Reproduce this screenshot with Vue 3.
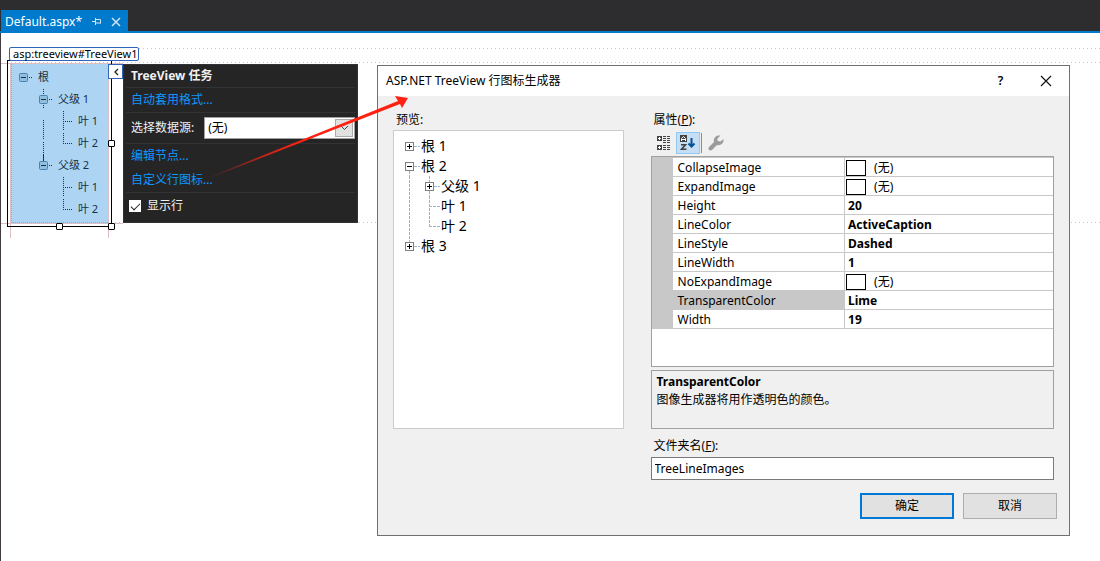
<script setup>
import { ref } from 'vue'

const dataSource = ref('none')
const showLines = ref(true)
const folder = ref('TreeLineImages')

const groups = [
  { label: '父级 1', kind: 'first', leaves: ['叶 1', '叶 2'] },
  { label: '父级 2', kind: 'last', leaves: ['叶 1', '叶 2'] },
]

const preview = [
  { cells: ['plus'], label: '根 1' },
  { cells: ['minus-down'], label: '根 2' },
  { cells: ['line', 'plus-mid'], label: '父级 1' },
  { cells: ['line', 'tee'], label: '叶 1' },
  { cells: ['line', 'elbow'], label: '叶 2' },
  { cells: ['plus-up'], label: '根 3' },
]

const properties = [
  { name: 'CollapseImage', image: true },
  { name: 'ExpandImage', image: true },
  { name: 'Height', value: '20' },
  { name: 'LineColor', value: 'ActiveCaption' },
  { name: 'LineStyle', value: 'Dashed' },
  { name: 'LineWidth', value: '1' },
  { name: 'NoExpandImage', image: true },
  { name: 'TransparentColor', value: 'Lime', selected: true },
  { name: 'Width', value: '19' },
]

const linePaths = {
  plus: 'M14 10.5H20',
  'minus-down': 'M14 10.5H20M9.5 15V20',
  line: 'M9.5 0V20',
  'plus-mid': 'M9.5 0V6M9.5 15V20M14 10.5H20',
  tee: 'M9.5 0V20M9 10.5H20',
  elbow: 'M9.5 0V11M9 10.5H20',
  'plus-up': 'M9.5 0V6M14 10.5H20',
}
</script>

<template>
  <div class="ide">
    <header class="tabs">
      <div class="tab">
        <span class="tab-name">Default.aspx*</span>
        <button class="tab-btn" type="button" aria-label="固定">
          <svg width="11" height="9" viewBox="0 0 11 9"><path d="M1 4.5H4M4.5 1V8M4.5 2.5H9.5V6.5M4.5 6H9.5" /></svg>
        </button>
        <button class="tab-btn close" type="button" aria-label="关闭">
          <svg width="10" height="10" viewBox="0 0 10 10"><path d="M1 1L9 9M9 1L1 9" /></svg>
        </button>
      </div>
    </header>

    <main class="surface">
      <i class="dots tag-line"></i>
      <i class="dots top-line"></i>
      <i class="dots bottom-line"></i>
      <i class="guide h top"></i>
      <i class="guide h bottom"></i>
      <i class="guide v left"></i>
      <i class="guide v right"></i>

      <section class="control">
        <div class="tag">asp:treeview#TreeView1</div>
        <div class="frame">
          <div class="tree">
            <div class="row">
              <svg class="cell" viewBox="0 0 20 22"><rect class="box" x="5.5" y="7.5" width="8" height="8" rx="1" /><path class="sign" d="M7 11.5H12" /><path class="dot" d="M15 11.5H19" /></svg>
              <span>根</span>
            </div>
            <div v-for="g in groups" :key="g.label" class="group">
              <div class="row">
                <svg class="cell" viewBox="0 0 20 22">
                  <path v-if="g.kind === 'first'" class="dot" d="M9.5 1V7M9.5 17V21" />
                  <path v-else class="solid" d="M9.5 0V7" />
                  <rect class="box" x="5.5" y="7.5" width="8" height="8" rx="1" /><path class="sign" d="M7 11.5H12" /><path class="dot" d="M15 11.5H19" />
                </svg>
                <span>{{ g.label }}</span>
              </div>
              <div class="children">
                <svg class="cell tall" viewBox="0 0 20 44"><path v-if="g.kind === 'first'" class="dot" d="M9.5 10V30M9.5 32V44" /></svg>
                <div>
                  <div v-for="(leaf, i) in g.leaves" :key="leaf" class="row">
                    <svg class="cell" viewBox="0 0 20 22"><path class="dot" :d="i === 0 ? 'M9.5 1V21M11 11.5H19' : 'M9.5 1V12M11 11.5H19'" /></svg>
                    <span>{{ leaf }}</span>
                  </div>
                </div>
              </div>
            </div>
          </div>
          <i class="handle e"></i>
          <i class="handle s"></i>
          <i class="handle se"></i>
          <button class="smart" type="button" aria-label="TreeView 任务">
            <svg width="6" height="8" viewBox="0 0 6 8"><path d="M5 1L2 4L5 7" /></svg>
          </button>
        </div>
      </section>

      <section class="tasks">
        <h2>TreeView 任务</h2>
        <div class="part"><a href="#">自动套用格式...</a></div>
        <div class="part source">
          <label for="source">选择数据源:</label>
          <span class="select">
            <select id="source" v-model="dataSource"><option value="none">(无)</option></select>
            <span class="arrow-box"><svg width="9" height="6" viewBox="0 0 9 6"><path d="M1 1L4.5 4.5L8 1" /></svg></span>
          </span>
        </div>
        <div class="part"><a href="#">编辑节点...</a><a href="#">自定义行图标...</a></div>
        <div class="part check">
          <input id="lines" v-model="showLines" type="checkbox" />
          <label for="lines">显示行</label>
        </div>
      </section>

      <section class="dialog" role="dialog" aria-labelledby="title">
        <div class="titlebar">
          <h1 id="title">ASP.NET TreeView 行图标生成器</h1>
          <button type="button" aria-label="帮助">?</button>
          <button type="button" aria-label="关闭">
            <svg width="12" height="12" viewBox="0 0 12 12"><path d="M1 1L11 11M11 1L1 11" /></svg>
          </button>
        </div>

        <div class="body">
          <div class="column">
            <p class="caption">预览:</p>
            <ul class="preview">
              <li v-for="n in preview" :key="n.label + n.cells.join()">
                <svg v-for="(c, i) in n.cells" :key="i" width="20" height="20" viewBox="0 0 20 20">
                  <path class="dash" :d="linePaths[c]" />
                  <template v-if="c.startsWith('plus') || c.startsWith('minus')">
                    <rect x="5.5" y="6.5" width="8" height="8" />
                    <path class="mark" :d="c.startsWith('plus') ? 'M7 10.5H12M9.5 8V13' : 'M7 10.5H12'" />
                  </template>
                </svg>
                <span>{{ n.label }}</span>
              </li>
            </ul>
          </div>

          <div class="column">
            <p class="caption">属性(<u>P</u>):</p>
            <div class="toolbar">
              <button type="button" aria-label="按分类顺序">
                <svg width="15" height="15" viewBox="0 0 15 15">
                  <path fill="#424242" d="M0 0h5v5H0zM0 9h5v5H0z" />
                  <path stroke="#fff" d="M1 2.5H4M2.5 1V4M1 11.5H4M2.5 10V13" />
                  <path stroke="#424242" stroke-dasharray="3 1" d="M6 .5H14M6 2.5H14M6 4.5H14M6 6.5H14M6 9.5H14M6 11.5H14M6 13.5H14" />
                </svg>
              </button>
              <button class="active" type="button" aria-label="字母顺序">
                <svg width="16" height="16" viewBox="0 0 16 16">
                  <path fill="#424242" d="M0 0h7v7H0z" />
                  <path stroke="#fff" fill="none" d="M1.5 6V3.5L3.5 1.5L5.5 3.5V6M2 4.5H5" />
                  <path stroke="#424242" stroke-width="1.6" fill="none" d="M1 9.8H5.5L1.5 14.2H6.5" />
                  <path stroke="#00539c" stroke-width="2" fill="none" d="M11.5 3V12M8.5 8.5L11.5 11.5L14.5 8.5" />
                </svg>
              </button>
              <i class="divider"></i>
              <button type="button" aria-label="属性页" disabled>
                <svg width="16" height="16" viewBox="0 0 16 16"><path fill="#9b9b9b" d="M1 12L6 7C5 3 8 0 12.500 .5L9.500 3.500V6L12.500 6.500L15.500 4C16 8.500 12.500 11 9 10L4 15C1.500 16.500 -.5 14 1 12Z" /></svg>
              </button>
            </div>
            <div class="grid">
              <table>
                <tbody>
                  <tr v-for="p in properties" :key="p.name" :class="{ selected: p.selected }">
                    <td class="gutter"></td>
                    <th scope="row">{{ p.name }}</th>
                    <td class="value">
                      <span v-if="p.image" class="image"><i></i>(无)</span>
                      <b v-else>{{ p.value }}</b>
                    </td>
                  </tr>
                </tbody>
              </table>
            </div>
            <div class="help">
              <b>TransparentColor</b>
              <p>图像生成器将用作透明色的颜色。</p>
            </div>
          </div>

          <div class="folder">
            <label for="folder">文件夹名(<u>F</u>):</label>
            <input id="folder" v-model="folder" type="text" />
          </div>
        </div>

        <div class="actions">
          <button class="ok" type="button">确定</button>
          <button type="button">取消</button>
        </div>
      </section>

      <svg class="pointer" width="204" height="88" viewBox="0 0 204 88">
        <defs>
          <linearGradient id="fade" x1="0" y1="0" x2="1" y2="0">
            <stop offset="0" stop-color="#ff2213" stop-opacity="0" />
            <stop offset="0.3" stop-color="#ff2213" stop-opacity="0.8" />
            <stop offset="0.5" stop-color="#ff2213" />
          </linearGradient>
        </defs>
        <path fill="url(#fade)" d="M2 84L193 7L190 2L203 4L197 14L195 10L2 85Z" />
      </svg>
    </main>
  </div>
</template>

<style>
body {
  margin: 0;
}
</style>

<style scoped>
* {
  box-sizing: border-box;
}
.ide {
  min-height: 100vh;
  display: flex;
  flex-direction: column;
  background: #fff;
  color: #000;
  font: 12px/18px "Noto Sans", "Noto Sans CJK SC", sans-serif;
}
button,
input,
select {
  font: inherit;
  color: inherit;
}
button {
  padding: 0;
  border: 0;
  background: none;
  display: flex;
  align-items: center;
  justify-content: center;
}
h1,
h2,
p,
ul {
  margin: 0;
  padding: 0;
  font-size: inherit;
}
.tabs {
  background: #2d2d30;
  border-bottom: 2px solid #007acc;
  padding: 10px 0 0 1px;
  display: flex;
}
.tab {
  background: #007acc;
  color: #fff;
  height: 21px;
  width: 127px;
  padding: 2px 7px 0 4px;
  display: flex;
  align-items: center;
}
.tab-name {
  flex: 1;
}
.tab-btn {
  width: 11px;
  margin-right: 8px;
}
.tab-btn.close {
  margin-right: 0;
}
.tab-btn path {
  fill: none;
  stroke: #d0e6f5;
}
.tab-btn.close path {
  stroke-width: 1.5;
}
.surface {
  position: relative;
  flex: 1;
  border-left: 1px solid #433b42;
  padding: 14px 0 0 6px;
}
.dots {
  position: absolute;
  right: 0;
  height: 1px;
  background: repeating-linear-gradient(90deg, #c6c6c6 0 1px, transparent 1px 4px);
}
.tag-line {
  top: 15px;
  left: 138px;
}
.top-line {
  top: 29px;
  left: 10px;
}
.bottom-line {
  top: 189px;
  left: 10px;
}
.guide {
  position: absolute;
  background: #dcc0c4;
}
.guide.h {
  left: 0;
  width: 122px;
  height: 1px;
}
.guide.top {
  top: 30px;
}
.guide.bottom {
  top: 190px;
}
.guide.v {
  top: 30px;
  width: 1px;
  height: 175px;
}
.guide.left {
  left: 9px;
}
.guide.right {
  left: 107px;
}
.control {
  position: relative;
  width: fit-content;
}
.tag {
  position: relative;
  z-index: 1;
  margin-left: 2px;
  width: 130px;
  height: 14px;
  padding-left: 3px;
  border: 1px solid #3163bd;
  border-radius: 2px;
  background: #fff;
  font-size: 11px;
  line-height: 12px;
  white-space: nowrap;
}
.frame {
  position: relative;
  width: 105px;
  margin-top: -1px;
  padding: 3px;
  border: 1px solid #000;
}
.tree {
  background: #add4f2;
  border-left: 1px dotted #9aa9c0;
  border-bottom: 1px dotted #9aa9c0;
  padding: 2px 0 2px 2px;
  color: #16324a;
  font-size: 11px;
}
.row {
  display: flex;
  align-items: center;
  height: 22px;
}
.row span {
  padding-left: 4px;
  white-space: nowrap;
}
.group {
  padding-left: 20px;
}
.children {
  display: flex;
}
.cell {
  flex: none;
  width: 20px;
  height: 22px;
}
.cell.tall {
  height: 44px;
}
.dot {
  stroke: #17344c;
  stroke-dasharray: 1 1;
}
.solid,
.sign {
  stroke: #17344c;
}
.box {
  fill: #90bede;
  stroke: #4b82ad;
}
.handle {
  position: absolute;
  width: 7px;
  height: 7px;
  border: 1px solid #000;
  border-radius: 1px;
  background: #fff;
}
.handle.e {
  right: -4px;
  top: 79px;
}
.handle.s {
  left: 48px;
  bottom: -4px;
}
.handle.se {
  right: -4px;
  bottom: -4px;
}
.smart {
  position: absolute;
  left: 100px;
  top: 3px;
  width: 15px;
  height: 15px;
  border: 1px solid #3163bd;
  background: #fff;
}
.smart path {
  fill: none;
  stroke: #222;
  stroke-width: 1.3;
}
.tasks {
  position: absolute;
  left: 122px;
  top: 31px;
  width: 235px;
  padding: 0 2px 3px;
  border: 1px solid #333337;
  background: #252526;
  color: #f1f1f1;
}
.tasks h2 {
  height: 22px;
  padding-left: 5px;
  line-height: 22px;
}
.part {
  border-top: 1px solid #333337;
  padding-left: 5px;
}
.part a {
  display: block;
  width: fit-content;
  line-height: 24px;
  color: #0e97ff;
  text-decoration: none;
}
.source {
  display: flex;
  align-items: center;
  gap: 10px;
  height: 31px;
}
.select {
  position: relative;
  flex: 1;
}
.select select {
  display: block;
  width: 100%;
  height: 22px;
  padding: 0 3px;
  border: 1px solid #a0a0a0;
  border-radius: 0;
  appearance: none;
  background: #fff;
  color: #000;
}
.arrow-box {
  position: absolute;
  right: 2px;
  top: 2px;
  width: 18px;
  height: 18px;
  border: 1px solid #aaa;
  background: #e1e1e1;
  display: grid;
  place-items: center;
  pointer-events: none;
}
.arrow-box path {
  fill: none;
  stroke: #444;
}
.check {
  display: flex;
  align-items: center;
  gap: 6px;
  height: 27px;
  padding-left: 3px;
}
.check input {
  appearance: none;
  width: 12px;
  height: 12px;
  margin: 0;
  background: #fff;
  display: grid;
  place-items: center;
}
.check input:checked::after {
  content: "";
  width: 8px;
  height: 4px;
  border: solid #222;
  border-width: 0 0 1px 1px;
  transform: translateY(-1px) rotate(-45deg);
}
.dialog {
  position: absolute;
  left: 376px;
  right: 30px;
  top: 32px;
  border: 1px solid #707073;
  background: #f0f0f0;
}
.titlebar {
  display: flex;
  align-items: center;
  height: 30px;
  padding: 0 1px 0 8px;
  background: #fff;
}
.titlebar h1 {
  flex: 1;
  font-weight: 400;
}
.titlebar button {
  width: 45px;
  height: 30px;
  font-weight: 600;
}
.titlebar path {
  stroke: #111;
  stroke-width: 1.2;
}
.body {
  display: grid;
  grid-template-columns: 4fr 7fr;
  column-gap: 27px;
  row-gap: 8px;
  padding: 15px 15px 0;
}
.column {
  display: flex;
  flex-direction: column;
}
.caption,
.folder label {
  padding-left: 3px;
}
.preview {
  flex: 1;
  margin-top: 1px;
  padding: 5px 6px;
  border: 1px solid #ccc;
  background: #fff;
  list-style: none;
  font-size: 14px;
}
.preview li {
  display: flex;
  height: 20px;
  line-height: 20px;
}
.preview li span {
  padding-left: 1px;
}
.preview rect {
  fill: #fff;
  stroke: #808080;
}
.dash {
  fill: none;
  stroke: #99b4d1;
  stroke-dasharray: 3 1;
}
.mark {
  stroke: #000;
}
.toolbar {
  display: flex;
  align-items: center;
  height: 22px;
  margin: 3px 0 2px;
  padding-left: 3px;
}
.toolbar button {
  width: 22px;
  height: 22px;
}
.toolbar button.active {
  width: 24px;
  border: 1px solid #90c8f6;
  background: #c5def4;
}
.divider {
  width: 1px;
  height: 20px;
  margin: 0 3px 0 1px;
  background: #8c8c8c;
}
.grid {
  height: 211px;
  border: 1px solid #a0a0a0;
  background: #fff;
  margin-bottom: 3px;
}
table {
  width: 100%;
  border-collapse: collapse;
  table-layout: fixed;
}
tr {
  height: 19px;
}
td,
th {
  height: 19px;
  padding: 1px 0 0;
  border: solid #c8c8c8;
  border-width: 1px 0;
  font-weight: 400;
  text-align: left;
  line-height: 17px;
}
th {
  width: 172px;
  padding-left: 5px;
}
.gutter {
  width: 21px;
  background: #c8c8c8;
}
.value {
  border-left-width: 1px;
  padding-left: 3px;
}
.selected th {
  background: #c8c8c8;
}
.image {
  display: flex;
  align-items: center;
  gap: 8px;
  margin-left: -2px;
}
.image i {
  width: 20px;
  height: 16px;
  border: 1px solid #000;
}
.help {
  height: 59px;
  border: 1px solid #a0a0a0;
  padding: 2px 5px;
}
.help b {
  display: block;
}
.folder {
  grid-column: 2;
  display: flex;
  flex-direction: column;
  gap: 2px;
}
.folder input {
  height: 23px;
  padding: 0 3px;
  border: 1px solid #7a7a7a;
  background: #fff;
}
.actions {
  display: flex;
  justify-content: flex-end;
  gap: 9px;
  padding: 13px 12px 16px;
}
.actions button {
  width: 94px;
  height: 26px;
  border: 1px solid #adadad;
  background: #e1e1e1;
}
.actions .ok {
  border: 2px solid #0078d7;
}
.pointer {
  position: absolute;
  left: 204px;
  top: 61px;
  pointer-events: none;
}
</style>
